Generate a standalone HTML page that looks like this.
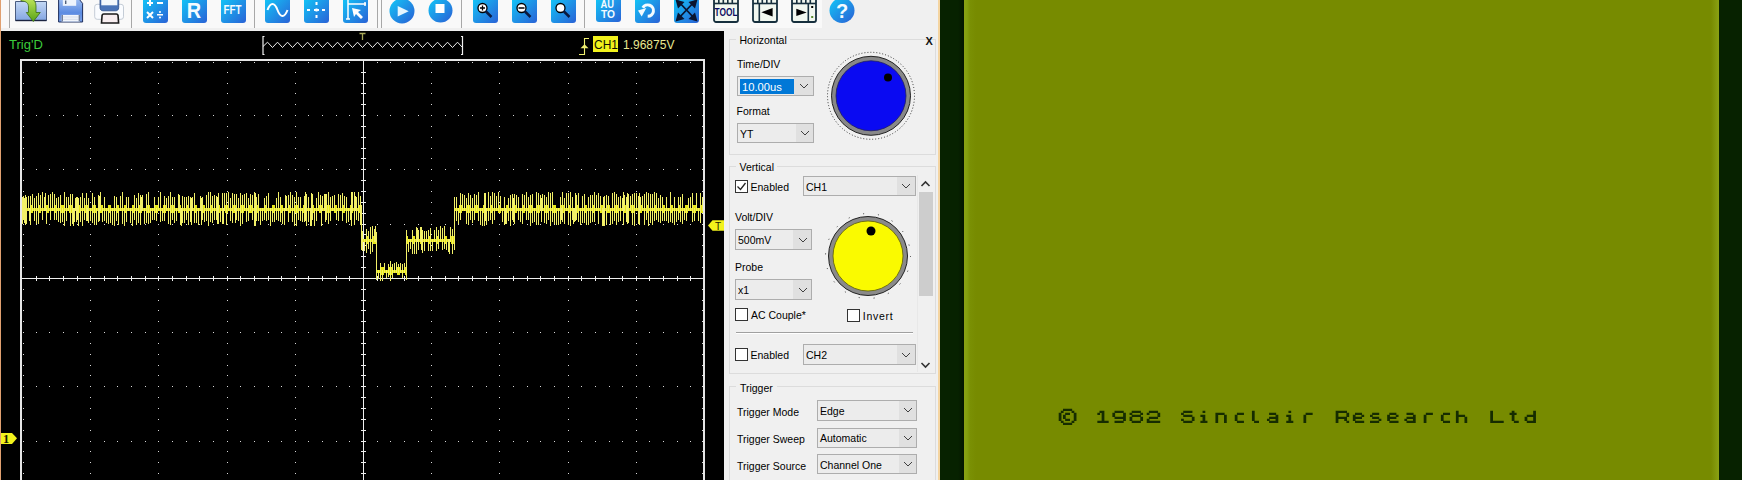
<!DOCTYPE html>
<html><head><meta charset="utf-8"><style>
html,body{margin:0;padding:0;width:1742px;height:480px;overflow:hidden;background:#f0f0f0;position:relative;font-family:'Liberation Sans', sans-serif}
</style></head><body>
<div style="position:absolute;left:0;top:0;width:822px;height:28px;background:#f9f9f9"></div>
<div style="position:absolute;left:0;top:0;width:1px;height:480px;background:#e0a070"></div>
<div style="position:absolute;left:9px;top:0;width:1px;height:28px;background:#a8a8a8"></div><div style="position:absolute;left:131px;top:0;width:1px;height:28px;background:#a8a8a8"></div><div style="position:absolute;left:254px;top:0;width:1px;height:28px;background:#a8a8a8"></div><div style="position:absolute;left:377px;top:0;width:1px;height:28px;background:#a8a8a8"></div><div style="position:absolute;left:381px;top:0;width:1px;height:28px;background:#a8a8a8"></div><div style="position:absolute;left:461px;top:0;width:1px;height:28px;background:#a8a8a8"></div><div style="position:absolute;left:584px;top:0;width:1px;height:28px;background:#a8a8a8"></div><svg style="position:absolute;left:14px;top:-4px" width="36" height="28" viewBox="14 -4 36 28">
<defs><linearGradient id="fold" x1="0" y1="0" x2="0" y2="1"><stop offset="0" stop-color="#c4d8f4"/><stop offset="1" stop-color="#84a6e2"/></linearGradient>
<linearGradient id="arr" x1="0" y1="0" x2="0" y2="1"><stop offset="0" stop-color="#c8ec60"/><stop offset="1" stop-color="#5aa418"/></linearGradient></defs>
<path d="M15.5 1.5h31v19h-31z" fill="url(#fold)" stroke="#4a5c80" stroke-width="1"/>
<path d="M15.5 20.5h31" stroke="#1c2440" stroke-width="1.4"/>
<path d="M21 -4C30 -4 36 -1 36 6V12.5H40.3L33.3 21.5L26.3 12.5H28.5V7C28.5 3 26 1 21 1Z" fill="url(#arr)" stroke="#3a6a18" stroke-width="0.8"/>
</svg><svg style="position:absolute;left:56px;top:0px" width="30" height="26" viewBox="56 0 30 26">
<defs><linearGradient id="flp" x1="0" y1="0" x2="0" y2="1"><stop offset="0" stop-color="#9cbcf0"/><stop offset="0.6" stop-color="#5c8ce2"/><stop offset="1" stop-color="#7aa0e6"/></linearGradient></defs>
<path d="M58.6 -1h20.4l3.6 4.4v18.6h-24z" fill="url(#flp)" stroke="#1e2e5c" stroke-width="1"/>
<rect x="62.8" y="-1" width="13.4" height="6.8" fill="#eef4fc"/>
<rect x="65" y="0.5" width="1.4" height="3.5" fill="#50607a"/>
<rect x="61.6" y="14.9" width="18.4" height="6.7" fill="#f2f6fc"/>
<path d="M63 17h15.5M63 19.3h15.5" stroke="#c8d0e0" stroke-width="0.7"/>
<path d="M62.3 15v6.5M79.3 15v6.5" stroke="#6a7a98" stroke-width="1.3"/>
</svg><svg style="position:absolute;left:92px;top:0px" width="34" height="26" viewBox="92 0 34 26">
<rect x="94.7" y="4.3" width="28.8" height="15" rx="2.5" fill="#fafcff" stroke="#c4ccd6" stroke-width="1"/>
<path d="M100 -1h18.7v8.8c0 2-1.5 3-3 3h-12.7c-1.5 0-3-1-3-3z" fill="#4a74b8" stroke="#2c4c88" stroke-width="0.8"/>
<rect x="101.3" y="-1" width="16" height="6.3" fill="#f4f8fc"/>
<path d="M101.5 23l0.6-7.8c0.2-0.8 0.8-1.2 1.6-1.2h12.7c0.8 0 1.4 0.4 1.6 1.2l0.6 7.8z" fill="#f8eef0" stroke="#1a1a1a" stroke-width="1.6"/>
</svg><svg style="position:absolute;left:143px;top:-3px" width="25" height="26" viewBox="0 0 25 26">
<defs><linearGradient id="g143" x1="0" y1="0" x2="1" y2="1"><stop offset="0" stop-color="#12c8f8"/><stop offset="1" stop-color="#2a62d6"/></linearGradient></defs>
<rect x="0" y="0" width="25" height="26" rx="3" fill="url(#g143)"/>
<g transform="translate(0,3)"><g fill="#fff"><rect x="4" y="2" width="6" height="2"/><rect x="6" y="0" width="2" height="6"/><rect x="14" y="2" width="6" height="2"/><path d="M4 12l6 6M10 12l-6 6" stroke="#fff" stroke-width="2"/><rect x="14" y="14" width="6" height="1.5"/><circle cx="17" cy="12" r="1"/><circle cx="17" cy="17.5" r="1"/></g></g></svg><svg style="position:absolute;left:182px;top:-3px" width="25" height="26" viewBox="0 0 25 26">
<defs><linearGradient id="g182" x1="0" y1="0" x2="1" y2="1"><stop offset="0" stop-color="#12c8f8"/><stop offset="1" stop-color="#2a62d6"/></linearGradient></defs>
<rect x="0" y="0" width="25" height="26" rx="3" fill="url(#g182)"/>
<g transform="translate(0,3)"><text x="4.7" y="17.7" font-family="Liberation Sans" font-weight="bold" font-size="21.5" fill="#f4fbff" textLength="14.4" lengthAdjust="spacingAndGlyphs">R</text></g></svg><svg style="position:absolute;left:221px;top:-3px" width="25" height="26" viewBox="0 0 25 26">
<defs><linearGradient id="g221" x1="0" y1="0" x2="1" y2="1"><stop offset="0" stop-color="#12c8f8"/><stop offset="1" stop-color="#2a62d6"/></linearGradient></defs>
<rect x="0" y="0" width="25" height="26" rx="3" fill="url(#g221)"/>
<g transform="translate(0,3)"><text x="2.6" y="14.1" font-family="Liberation Sans" font-weight="bold" font-size="12.3" fill="#f4fbff" textLength="18" lengthAdjust="spacingAndGlyphs">FFT</text></g></svg><svg style="position:absolute;left:265px;top:-3px" width="25" height="26" viewBox="0 0 25 26">
<defs><linearGradient id="g265" x1="0" y1="0" x2="1" y2="1"><stop offset="0" stop-color="#12c8f8"/><stop offset="1" stop-color="#2a62d6"/></linearGradient></defs>
<rect x="0" y="0" width="25" height="26" rx="3" fill="url(#g265)"/>
<g transform="translate(0,3)"><path d="M2.5 10c3-8 7-8 10 0s7 8 10 0" stroke="#fff" stroke-width="2" fill="none"/></g></svg><svg style="position:absolute;left:304px;top:-3px" width="25" height="26" viewBox="0 0 25 26">
<defs><linearGradient id="g304" x1="0" y1="0" x2="1" y2="1"><stop offset="0" stop-color="#12c8f8"/><stop offset="1" stop-color="#2a62d6"/></linearGradient></defs>
<rect x="0" y="0" width="25" height="26" rx="3" fill="url(#g304)"/>
<g transform="translate(0,3)"><g fill="#fff"><rect x="11.5" y="2" width="2" height="3"/><rect x="11.5" y="8.5" width="2" height="3"/><rect x="11.5" y="15" width="2" height="3"/><rect x="3" y="9" width="3" height="2"/><rect x="10" y="9" width="5" height="2"/><rect x="18" y="9" width="3" height="2"/></g></g></svg><svg style="position:absolute;left:343px;top:-3px" width="25" height="26" viewBox="0 0 25 26">
<defs><linearGradient id="g343" x1="0" y1="0" x2="1" y2="1"><stop offset="0" stop-color="#12c8f8"/><stop offset="1" stop-color="#2a62d6"/></linearGradient></defs>
<rect x="0" y="0" width="25" height="26" rx="3" fill="url(#g343)"/>
<g transform="translate(0,3)"><g stroke="#fff" fill="none" stroke-width="1.5"><path d="M5 0v19M5 4h18M3 19h4M22 2v4"/></g><path d="M9 8l9 2-3 2 5 5-2 2-5-5-2 3z" fill="#fff"/></g></svg><svg style="position:absolute;left:389px;top:-2px" width="26" height="26" viewBox="0 0 26 26">
<defs><linearGradient id="pc" x1="0" y1="0" x2="1" y2="1"><stop offset="0" stop-color="#12c8f8"/><stop offset="1" stop-color="#2a5ed4"/></linearGradient></defs>
<circle cx="13" cy="13" r="12.5" fill="url(#pc)"/><path d="M8.7 8l11 5.2-11 5.2z" fill="#e6f6ff"/></svg><svg style="position:absolute;left:428px;top:-2px" width="25" height="25" viewBox="0 0 25 25">
<circle cx="12.5" cy="12.5" r="12" fill="url(#pc)"/><rect x="7.5" y="6" width="9" height="9" fill="#fff"/></svg><svg style="position:absolute;left:473px;top:-3px" width="25" height="26" viewBox="0 0 25 26">
<defs><linearGradient id="g473" x1="0" y1="0" x2="1" y2="1"><stop offset="0" stop-color="#12c8f8"/><stop offset="1" stop-color="#2a62d6"/></linearGradient></defs>
<rect x="0" y="0" width="25" height="26" rx="3" fill="url(#g473)"/>
<g transform="translate(0,3)"><circle cx="9.5" cy="8" r="4.5" fill="#fff" stroke="#000" stroke-width="1.3"/><path d="M7 8h5M9.5 5.5v5" stroke="#000" stroke-width="1.3"/><path d="M12.5 11l6 6" stroke="#0a1a40" stroke-width="2.5"/></g></svg><svg style="position:absolute;left:512px;top:-3px" width="25" height="26" viewBox="0 0 25 26">
<defs><linearGradient id="g512" x1="0" y1="0" x2="1" y2="1"><stop offset="0" stop-color="#12c8f8"/><stop offset="1" stop-color="#2a62d6"/></linearGradient></defs>
<rect x="0" y="0" width="25" height="26" rx="3" fill="url(#g512)"/>
<g transform="translate(0,3)"><circle cx="9.5" cy="8" r="4.5" fill="#fff" stroke="#000" stroke-width="1.3"/><path d="M6.5 8h6" stroke="#000" stroke-width="1.5"/><path d="M12.5 11l6 6" stroke="#0a1a40" stroke-width="2.5"/></g></svg><svg style="position:absolute;left:551px;top:-3px" width="25" height="26" viewBox="0 0 25 26">
<defs><linearGradient id="g551" x1="0" y1="0" x2="1" y2="1"><stop offset="0" stop-color="#12c8f8"/><stop offset="1" stop-color="#2a62d6"/></linearGradient></defs>
<rect x="0" y="0" width="25" height="26" rx="3" fill="url(#g551)"/>
<g transform="translate(0,3)"><circle cx="9.5" cy="8" r="4.5" fill="#fff" stroke="#000" stroke-width="1.3"/><path d="M12.5 11l6 6" stroke="#0a1a40" stroke-width="2.5"/></g></svg><svg style="position:absolute;left:596px;top:-3px" width="25" height="25" viewBox="0 0 25 25">
<defs><linearGradient id="g596" x1="0" y1="0" x2="1" y2="1"><stop offset="0" stop-color="#12c8f8"/><stop offset="1" stop-color="#2a62d6"/></linearGradient></defs>
<rect x="0" y="0" width="25" height="25" rx="3" fill="url(#g596)"/>
<g transform="translate(0,3)"><text x="4.5" y="8.4" font-family="Liberation Sans" font-weight="bold" font-size="10.3" fill="#f4fbff" textLength="13.5" lengthAdjust="spacingAndGlyphs">AU</text><text x="4.9" y="17.7" font-family="Liberation Sans" font-weight="bold" font-size="10.3" fill="#f4fbff" textLength="14" lengthAdjust="spacingAndGlyphs">TO</text></g></svg><svg style="position:absolute;left:635px;top:-3px" width="25" height="26" viewBox="0 0 25 26">
<defs><linearGradient id="g635" x1="0" y1="0" x2="1" y2="1"><stop offset="0" stop-color="#12c8f8"/><stop offset="1" stop-color="#2a62d6"/></linearGradient></defs>
<rect x="0" y="0" width="25" height="26" rx="3" fill="url(#g635)"/>
<g transform="translate(0,3)"><path d="M12.7 16.3A5.7 5.7 0 1 0 7.8 7.8" stroke="#f4fbff" stroke-width="3" fill="none"/><path d="M3 10.6l8.3-2.6-4.6 8.6z" fill="#f4fbff"/></g></svg><svg style="position:absolute;left:674px;top:-3px" width="25" height="26" viewBox="0 0 25 26">
<defs><linearGradient id="g674" x1="0" y1="0" x2="1" y2="1"><stop offset="0" stop-color="#12c8f8"/><stop offset="1" stop-color="#2a62d6"/></linearGradient></defs>
<rect x="0" y="0" width="25" height="26" rx="3" fill="url(#g674)"/>
<g transform="translate(0,3)"><g stroke="#0a1530" stroke-width="1.8"><path d="M4 1l17 18M21 1L4 19"/></g><g fill="#0a1530"><path d="M1.5 -0.5l9 2.5-6.5 6.5z"/><path d="M23.5 -0.5l-9 2.5 6.5 6.5z"/><path d="M1.5 21.5l9-2.5-6.5-6.5z"/><path d="M23.5 21.5l-9-2.5 6.5-6.5z"/></g></g></svg><svg style="position:absolute;left:713px;top:-4px" width="26" height="27" viewBox="0 0 26 27">
<rect x="1" y="0" width="24" height="26" rx="2" fill="#f2f8f0" stroke="#17303e" stroke-width="1.8"/>
<path d="M1 7.5h24" stroke="#17303e" stroke-width="1.6"/>
<g fill="#17303e"><rect x="5" y="0" width="1.6" height="7"/><rect x="9.5" y="0" width="1.6" height="7"/><rect x="14" y="0" width="1.6" height="7"/><rect x="18.5" y="0" width="1.6" height="7"/></g>
<text x="13" y="19.5" text-anchor="middle" font-family="Liberation Sans" font-weight="bold" font-size="10.5" fill="#0c0c60" textLength="23" lengthAdjust="spacingAndGlyphs">TOOL</text></svg><svg style="position:absolute;left:752px;top:-4px" width="26" height="27" viewBox="0 0 26 27">
<rect x="1" y="0" width="24" height="26" rx="2" fill="#f2f8f0" stroke="#17303e" stroke-width="1.8"/>
<path d="M1 7.5h24" stroke="#17303e" stroke-width="1.6"/>
<g fill="#17303e"><rect x="5" y="0" width="1.6" height="7"/><rect x="9.5" y="0" width="1.6" height="7"/><rect x="14" y="0" width="1.6" height="7"/><rect x="18.5" y="0" width="1.6" height="7"/></g>
<path d="M7.3 7.5v18" stroke="#17303e" stroke-width="1.6"/><path d="M9.3 16.3l11.3-4.3v8.5z" fill="#000"/></svg><svg style="position:absolute;left:791px;top:-4px" width="26" height="27" viewBox="0 0 26 27">
<rect x="1" y="0" width="24" height="26" rx="2" fill="#f2f8f0" stroke="#17303e" stroke-width="1.8"/>
<path d="M1 7.5h24" stroke="#17303e" stroke-width="1.6"/>
<g fill="#17303e"><rect x="5" y="0" width="1.6" height="7"/><rect x="9.5" y="0" width="1.6" height="7"/><rect x="14" y="0" width="1.6" height="7"/><rect x="18.5" y="0" width="1.6" height="7"/></g>
<path d="M17.3 7.5v18" stroke="#17303e" stroke-width="1.6"/><path d="M5.3 12.8l10.4 3.6-10.4 3.6z" fill="#000"/><rect x="20.2" y="10" width="2" height="2" fill="#000"/><rect x="20.2" y="20" width="2" height="2" fill="#5a8a30"/></svg><svg style="position:absolute;left:829px;top:-2px" width="26" height="26" viewBox="0 0 26 26">
<circle cx="13" cy="12.5" r="12.5" fill="url(#pc)"/><text x="13" y="19.5" text-anchor="middle" font-family="Liberation Sans" font-weight="bold" font-size="20" fill="#f4fbff">?</text></svg>
<div style="position:absolute;left:1px;top:31px;width:723px;height:449px;background:#000"></div>
<svg width="723" height="449" viewBox="1 31 723 449" style="position:absolute;left:1px;top:31px">
<g shape-rendering="crispEdges"><rect x="20" y="59" width="685" height="2" fill="#e6e6e6"/><rect x="20" y="59" width="2" height="421" fill="#e6e6e6"/><rect x="703" y="59" width="2" height="421" fill="#e6e6e6"/><path d="M23 72h1v1h-1zM23 83h1v1h-1zM23 93h1v1h-1zM23 104h1v1h-1zM23 115h1v1h-1zM23 126h1v1h-1zM23 137h1v1h-1zM23 148h1v1h-1zM23 158h1v1h-1zM23 169h1v1h-1zM23 180h1v1h-1zM23 191h1v1h-1zM23 202h1v1h-1zM23 213h1v1h-1zM23 224h1v1h-1zM23 234h1v1h-1zM23 245h1v1h-1zM23 256h1v1h-1zM23 267h1v1h-1zM23 278h1v1h-1zM23 289h1v1h-1zM23 300h1v1h-1zM23 310h1v1h-1zM23 321h1v1h-1zM23 332h1v1h-1zM23 343h1v1h-1zM23 354h1v1h-1zM23 365h1v1h-1zM23 375h1v1h-1zM23 386h1v1h-1zM23 397h1v1h-1zM23 408h1v1h-1zM23 419h1v1h-1zM23 430h1v1h-1zM23 441h1v1h-1zM23 451h1v1h-1zM23 462h1v1h-1zM23 473h1v1h-1zM90 72h1v1h-1zM90 83h1v1h-1zM90 93h1v1h-1zM90 104h1v1h-1zM90 115h1v1h-1zM90 126h1v1h-1zM90 137h1v1h-1zM90 148h1v1h-1zM90 158h1v1h-1zM90 169h1v1h-1zM90 180h1v1h-1zM90 191h1v1h-1zM90 202h1v1h-1zM90 213h1v1h-1zM90 224h1v1h-1zM90 234h1v1h-1zM90 245h1v1h-1zM90 256h1v1h-1zM90 267h1v1h-1zM90 278h1v1h-1zM90 289h1v1h-1zM90 300h1v1h-1zM90 310h1v1h-1zM90 321h1v1h-1zM90 332h1v1h-1zM90 343h1v1h-1zM90 354h1v1h-1zM90 365h1v1h-1zM90 375h1v1h-1zM90 386h1v1h-1zM90 397h1v1h-1zM90 408h1v1h-1zM90 419h1v1h-1zM90 430h1v1h-1zM90 441h1v1h-1zM90 451h1v1h-1zM90 462h1v1h-1zM90 473h1v1h-1zM158 72h1v1h-1zM158 83h1v1h-1zM158 93h1v1h-1zM158 104h1v1h-1zM158 115h1v1h-1zM158 126h1v1h-1zM158 137h1v1h-1zM158 148h1v1h-1zM158 158h1v1h-1zM158 169h1v1h-1zM158 180h1v1h-1zM158 191h1v1h-1zM158 202h1v1h-1zM158 213h1v1h-1zM158 224h1v1h-1zM158 234h1v1h-1zM158 245h1v1h-1zM158 256h1v1h-1zM158 267h1v1h-1zM158 278h1v1h-1zM158 289h1v1h-1zM158 300h1v1h-1zM158 310h1v1h-1zM158 321h1v1h-1zM158 332h1v1h-1zM158 343h1v1h-1zM158 354h1v1h-1zM158 365h1v1h-1zM158 375h1v1h-1zM158 386h1v1h-1zM158 397h1v1h-1zM158 408h1v1h-1zM158 419h1v1h-1zM158 430h1v1h-1zM158 441h1v1h-1zM158 451h1v1h-1zM158 462h1v1h-1zM158 473h1v1h-1zM227 72h1v1h-1zM227 83h1v1h-1zM227 93h1v1h-1zM227 104h1v1h-1zM227 115h1v1h-1zM227 126h1v1h-1zM227 137h1v1h-1zM227 148h1v1h-1zM227 158h1v1h-1zM227 169h1v1h-1zM227 180h1v1h-1zM227 191h1v1h-1zM227 202h1v1h-1zM227 213h1v1h-1zM227 224h1v1h-1zM227 234h1v1h-1zM227 245h1v1h-1zM227 256h1v1h-1zM227 267h1v1h-1zM227 278h1v1h-1zM227 289h1v1h-1zM227 300h1v1h-1zM227 310h1v1h-1zM227 321h1v1h-1zM227 332h1v1h-1zM227 343h1v1h-1zM227 354h1v1h-1zM227 365h1v1h-1zM227 375h1v1h-1zM227 386h1v1h-1zM227 397h1v1h-1zM227 408h1v1h-1zM227 419h1v1h-1zM227 430h1v1h-1zM227 441h1v1h-1zM227 451h1v1h-1zM227 462h1v1h-1zM227 473h1v1h-1zM295 72h1v1h-1zM295 83h1v1h-1zM295 93h1v1h-1zM295 104h1v1h-1zM295 115h1v1h-1zM295 126h1v1h-1zM295 137h1v1h-1zM295 148h1v1h-1zM295 158h1v1h-1zM295 169h1v1h-1zM295 180h1v1h-1zM295 191h1v1h-1zM295 202h1v1h-1zM295 213h1v1h-1zM295 224h1v1h-1zM295 234h1v1h-1zM295 245h1v1h-1zM295 256h1v1h-1zM295 267h1v1h-1zM295 278h1v1h-1zM295 289h1v1h-1zM295 300h1v1h-1zM295 310h1v1h-1zM295 321h1v1h-1zM295 332h1v1h-1zM295 343h1v1h-1zM295 354h1v1h-1zM295 365h1v1h-1zM295 375h1v1h-1zM295 386h1v1h-1zM295 397h1v1h-1zM295 408h1v1h-1zM295 419h1v1h-1zM295 430h1v1h-1zM295 441h1v1h-1zM295 451h1v1h-1zM295 462h1v1h-1zM295 473h1v1h-1zM431 72h1v1h-1zM431 83h1v1h-1zM431 93h1v1h-1zM431 104h1v1h-1zM431 115h1v1h-1zM431 126h1v1h-1zM431 137h1v1h-1zM431 148h1v1h-1zM431 158h1v1h-1zM431 169h1v1h-1zM431 180h1v1h-1zM431 191h1v1h-1zM431 202h1v1h-1zM431 213h1v1h-1zM431 224h1v1h-1zM431 234h1v1h-1zM431 245h1v1h-1zM431 256h1v1h-1zM431 267h1v1h-1zM431 278h1v1h-1zM431 289h1v1h-1zM431 300h1v1h-1zM431 310h1v1h-1zM431 321h1v1h-1zM431 332h1v1h-1zM431 343h1v1h-1zM431 354h1v1h-1zM431 365h1v1h-1zM431 375h1v1h-1zM431 386h1v1h-1zM431 397h1v1h-1zM431 408h1v1h-1zM431 419h1v1h-1zM431 430h1v1h-1zM431 441h1v1h-1zM431 451h1v1h-1zM431 462h1v1h-1zM431 473h1v1h-1zM499 72h1v1h-1zM499 83h1v1h-1zM499 93h1v1h-1zM499 104h1v1h-1zM499 115h1v1h-1zM499 126h1v1h-1zM499 137h1v1h-1zM499 148h1v1h-1zM499 158h1v1h-1zM499 169h1v1h-1zM499 180h1v1h-1zM499 191h1v1h-1zM499 202h1v1h-1zM499 213h1v1h-1zM499 224h1v1h-1zM499 234h1v1h-1zM499 245h1v1h-1zM499 256h1v1h-1zM499 267h1v1h-1zM499 278h1v1h-1zM499 289h1v1h-1zM499 300h1v1h-1zM499 310h1v1h-1zM499 321h1v1h-1zM499 332h1v1h-1zM499 343h1v1h-1zM499 354h1v1h-1zM499 365h1v1h-1zM499 375h1v1h-1zM499 386h1v1h-1zM499 397h1v1h-1zM499 408h1v1h-1zM499 419h1v1h-1zM499 430h1v1h-1zM499 441h1v1h-1zM499 451h1v1h-1zM499 462h1v1h-1zM499 473h1v1h-1zM568 72h1v1h-1zM568 83h1v1h-1zM568 93h1v1h-1zM568 104h1v1h-1zM568 115h1v1h-1zM568 126h1v1h-1zM568 137h1v1h-1zM568 148h1v1h-1zM568 158h1v1h-1zM568 169h1v1h-1zM568 180h1v1h-1zM568 191h1v1h-1zM568 202h1v1h-1zM568 213h1v1h-1zM568 224h1v1h-1zM568 234h1v1h-1zM568 245h1v1h-1zM568 256h1v1h-1zM568 267h1v1h-1zM568 278h1v1h-1zM568 289h1v1h-1zM568 300h1v1h-1zM568 310h1v1h-1zM568 321h1v1h-1zM568 332h1v1h-1zM568 343h1v1h-1zM568 354h1v1h-1zM568 365h1v1h-1zM568 375h1v1h-1zM568 386h1v1h-1zM568 397h1v1h-1zM568 408h1v1h-1zM568 419h1v1h-1zM568 430h1v1h-1zM568 441h1v1h-1zM568 451h1v1h-1zM568 462h1v1h-1zM568 473h1v1h-1zM636 72h1v1h-1zM636 83h1v1h-1zM636 93h1v1h-1zM636 104h1v1h-1zM636 115h1v1h-1zM636 126h1v1h-1zM636 137h1v1h-1zM636 148h1v1h-1zM636 158h1v1h-1zM636 169h1v1h-1zM636 180h1v1h-1zM636 191h1v1h-1zM636 202h1v1h-1zM636 213h1v1h-1zM636 224h1v1h-1zM636 234h1v1h-1zM636 245h1v1h-1zM636 256h1v1h-1zM636 267h1v1h-1zM636 278h1v1h-1zM636 289h1v1h-1zM636 300h1v1h-1zM636 310h1v1h-1zM636 321h1v1h-1zM636 332h1v1h-1zM636 343h1v1h-1zM636 354h1v1h-1zM636 365h1v1h-1zM636 375h1v1h-1zM636 386h1v1h-1zM636 397h1v1h-1zM636 408h1v1h-1zM636 419h1v1h-1zM636 430h1v1h-1zM636 441h1v1h-1zM636 451h1v1h-1zM636 462h1v1h-1zM636 473h1v1h-1zM702 72h1v1h-1zM702 83h1v1h-1zM702 93h1v1h-1zM702 104h1v1h-1zM702 115h1v1h-1zM702 126h1v1h-1zM702 137h1v1h-1zM702 148h1v1h-1zM702 158h1v1h-1zM702 169h1v1h-1zM702 180h1v1h-1zM702 191h1v1h-1zM702 202h1v1h-1zM702 213h1v1h-1zM702 224h1v1h-1zM702 234h1v1h-1zM702 245h1v1h-1zM702 256h1v1h-1zM702 267h1v1h-1zM702 278h1v1h-1zM702 289h1v1h-1zM702 300h1v1h-1zM702 310h1v1h-1zM702 321h1v1h-1zM702 332h1v1h-1zM702 343h1v1h-1zM702 354h1v1h-1zM702 365h1v1h-1zM702 375h1v1h-1zM702 386h1v1h-1zM702 397h1v1h-1zM702 408h1v1h-1zM702 419h1v1h-1zM702 430h1v1h-1zM702 441h1v1h-1zM702 451h1v1h-1zM702 462h1v1h-1zM702 473h1v1h-1zM36 62h1v1h-1zM49 62h1v1h-1zM63 62h1v1h-1zM77 62h1v1h-1zM90 62h1v1h-1zM104 62h1v1h-1zM117 62h1v1h-1zM131 62h1v1h-1zM145 62h1v1h-1zM158 62h1v1h-1zM172 62h1v1h-1zM186 62h1v1h-1zM199 62h1v1h-1zM213 62h1v1h-1zM227 62h1v1h-1zM240 62h1v1h-1zM254 62h1v1h-1zM268 62h1v1h-1zM281 62h1v1h-1zM295 62h1v1h-1zM308 62h1v1h-1zM322 62h1v1h-1zM336 62h1v1h-1zM349 62h1v1h-1zM363 62h1v1h-1zM377 62h1v1h-1zM390 62h1v1h-1zM404 62h1v1h-1zM418 62h1v1h-1zM431 62h1v1h-1zM445 62h1v1h-1zM458 62h1v1h-1zM472 62h1v1h-1zM486 62h1v1h-1zM499 62h1v1h-1zM513 62h1v1h-1zM527 62h1v1h-1zM540 62h1v1h-1zM554 62h1v1h-1zM568 62h1v1h-1zM581 62h1v1h-1zM595 62h1v1h-1zM609 62h1v1h-1zM622 62h1v1h-1zM636 62h1v1h-1zM649 62h1v1h-1zM663 62h1v1h-1zM677 62h1v1h-1zM690 62h1v1h-1zM36 115h1v1h-1zM49 115h1v1h-1zM63 115h1v1h-1zM77 115h1v1h-1zM90 115h1v1h-1zM104 115h1v1h-1zM117 115h1v1h-1zM131 115h1v1h-1zM145 115h1v1h-1zM158 115h1v1h-1zM172 115h1v1h-1zM186 115h1v1h-1zM199 115h1v1h-1zM213 115h1v1h-1zM227 115h1v1h-1zM240 115h1v1h-1zM254 115h1v1h-1zM268 115h1v1h-1zM281 115h1v1h-1zM295 115h1v1h-1zM308 115h1v1h-1zM322 115h1v1h-1zM336 115h1v1h-1zM349 115h1v1h-1zM363 115h1v1h-1zM377 115h1v1h-1zM390 115h1v1h-1zM404 115h1v1h-1zM418 115h1v1h-1zM431 115h1v1h-1zM445 115h1v1h-1zM458 115h1v1h-1zM472 115h1v1h-1zM486 115h1v1h-1zM499 115h1v1h-1zM513 115h1v1h-1zM527 115h1v1h-1zM540 115h1v1h-1zM554 115h1v1h-1zM568 115h1v1h-1zM581 115h1v1h-1zM595 115h1v1h-1zM609 115h1v1h-1zM622 115h1v1h-1zM636 115h1v1h-1zM649 115h1v1h-1zM663 115h1v1h-1zM677 115h1v1h-1zM690 115h1v1h-1zM36 169h1v1h-1zM49 169h1v1h-1zM63 169h1v1h-1zM77 169h1v1h-1zM90 169h1v1h-1zM104 169h1v1h-1zM117 169h1v1h-1zM131 169h1v1h-1zM145 169h1v1h-1zM158 169h1v1h-1zM172 169h1v1h-1zM186 169h1v1h-1zM199 169h1v1h-1zM213 169h1v1h-1zM227 169h1v1h-1zM240 169h1v1h-1zM254 169h1v1h-1zM268 169h1v1h-1zM281 169h1v1h-1zM295 169h1v1h-1zM308 169h1v1h-1zM322 169h1v1h-1zM336 169h1v1h-1zM349 169h1v1h-1zM363 169h1v1h-1zM377 169h1v1h-1zM390 169h1v1h-1zM404 169h1v1h-1zM418 169h1v1h-1zM431 169h1v1h-1zM445 169h1v1h-1zM458 169h1v1h-1zM472 169h1v1h-1zM486 169h1v1h-1zM499 169h1v1h-1zM513 169h1v1h-1zM527 169h1v1h-1zM540 169h1v1h-1zM554 169h1v1h-1zM568 169h1v1h-1zM581 169h1v1h-1zM595 169h1v1h-1zM609 169h1v1h-1zM622 169h1v1h-1zM636 169h1v1h-1zM649 169h1v1h-1zM663 169h1v1h-1zM677 169h1v1h-1zM690 169h1v1h-1zM36 224h1v1h-1zM49 224h1v1h-1zM63 224h1v1h-1zM77 224h1v1h-1zM90 224h1v1h-1zM104 224h1v1h-1zM117 224h1v1h-1zM131 224h1v1h-1zM145 224h1v1h-1zM158 224h1v1h-1zM172 224h1v1h-1zM186 224h1v1h-1zM199 224h1v1h-1zM213 224h1v1h-1zM227 224h1v1h-1zM240 224h1v1h-1zM254 224h1v1h-1zM268 224h1v1h-1zM281 224h1v1h-1zM295 224h1v1h-1zM308 224h1v1h-1zM322 224h1v1h-1zM336 224h1v1h-1zM349 224h1v1h-1zM363 224h1v1h-1zM377 224h1v1h-1zM390 224h1v1h-1zM404 224h1v1h-1zM418 224h1v1h-1zM431 224h1v1h-1zM445 224h1v1h-1zM458 224h1v1h-1zM472 224h1v1h-1zM486 224h1v1h-1zM499 224h1v1h-1zM513 224h1v1h-1zM527 224h1v1h-1zM540 224h1v1h-1zM554 224h1v1h-1zM568 224h1v1h-1zM581 224h1v1h-1zM595 224h1v1h-1zM609 224h1v1h-1zM622 224h1v1h-1zM636 224h1v1h-1zM649 224h1v1h-1zM663 224h1v1h-1zM677 224h1v1h-1zM690 224h1v1h-1zM36 332h1v1h-1zM49 332h1v1h-1zM63 332h1v1h-1zM77 332h1v1h-1zM90 332h1v1h-1zM104 332h1v1h-1zM117 332h1v1h-1zM131 332h1v1h-1zM145 332h1v1h-1zM158 332h1v1h-1zM172 332h1v1h-1zM186 332h1v1h-1zM199 332h1v1h-1zM213 332h1v1h-1zM227 332h1v1h-1zM240 332h1v1h-1zM254 332h1v1h-1zM268 332h1v1h-1zM281 332h1v1h-1zM295 332h1v1h-1zM308 332h1v1h-1zM322 332h1v1h-1zM336 332h1v1h-1zM349 332h1v1h-1zM363 332h1v1h-1zM377 332h1v1h-1zM390 332h1v1h-1zM404 332h1v1h-1zM418 332h1v1h-1zM431 332h1v1h-1zM445 332h1v1h-1zM458 332h1v1h-1zM472 332h1v1h-1zM486 332h1v1h-1zM499 332h1v1h-1zM513 332h1v1h-1zM527 332h1v1h-1zM540 332h1v1h-1zM554 332h1v1h-1zM568 332h1v1h-1zM581 332h1v1h-1zM595 332h1v1h-1zM609 332h1v1h-1zM622 332h1v1h-1zM636 332h1v1h-1zM649 332h1v1h-1zM663 332h1v1h-1zM677 332h1v1h-1zM690 332h1v1h-1zM36 386h1v1h-1zM49 386h1v1h-1zM63 386h1v1h-1zM77 386h1v1h-1zM90 386h1v1h-1zM104 386h1v1h-1zM117 386h1v1h-1zM131 386h1v1h-1zM145 386h1v1h-1zM158 386h1v1h-1zM172 386h1v1h-1zM186 386h1v1h-1zM199 386h1v1h-1zM213 386h1v1h-1zM227 386h1v1h-1zM240 386h1v1h-1zM254 386h1v1h-1zM268 386h1v1h-1zM281 386h1v1h-1zM295 386h1v1h-1zM308 386h1v1h-1zM322 386h1v1h-1zM336 386h1v1h-1zM349 386h1v1h-1zM363 386h1v1h-1zM377 386h1v1h-1zM390 386h1v1h-1zM404 386h1v1h-1zM418 386h1v1h-1zM431 386h1v1h-1zM445 386h1v1h-1zM458 386h1v1h-1zM472 386h1v1h-1zM486 386h1v1h-1zM499 386h1v1h-1zM513 386h1v1h-1zM527 386h1v1h-1zM540 386h1v1h-1zM554 386h1v1h-1zM568 386h1v1h-1zM581 386h1v1h-1zM595 386h1v1h-1zM609 386h1v1h-1zM622 386h1v1h-1zM636 386h1v1h-1zM649 386h1v1h-1zM663 386h1v1h-1zM677 386h1v1h-1zM690 386h1v1h-1zM36 441h1v1h-1zM49 441h1v1h-1zM63 441h1v1h-1zM77 441h1v1h-1zM90 441h1v1h-1zM104 441h1v1h-1zM117 441h1v1h-1zM131 441h1v1h-1zM145 441h1v1h-1zM158 441h1v1h-1zM172 441h1v1h-1zM186 441h1v1h-1zM199 441h1v1h-1zM213 441h1v1h-1zM227 441h1v1h-1zM240 441h1v1h-1zM254 441h1v1h-1zM268 441h1v1h-1zM281 441h1v1h-1zM295 441h1v1h-1zM308 441h1v1h-1zM322 441h1v1h-1zM336 441h1v1h-1zM349 441h1v1h-1zM363 441h1v1h-1zM377 441h1v1h-1zM390 441h1v1h-1zM404 441h1v1h-1zM418 441h1v1h-1zM431 441h1v1h-1zM445 441h1v1h-1zM458 441h1v1h-1zM472 441h1v1h-1zM486 441h1v1h-1zM499 441h1v1h-1zM513 441h1v1h-1zM527 441h1v1h-1zM540 441h1v1h-1zM554 441h1v1h-1zM568 441h1v1h-1zM581 441h1v1h-1zM595 441h1v1h-1zM609 441h1v1h-1zM622 441h1v1h-1zM636 441h1v1h-1zM649 441h1v1h-1zM663 441h1v1h-1zM677 441h1v1h-1zM690 441h1v1h-1z" fill="#d8d8d8"/><rect x="363" y="61" width="1" height="419" fill="#f0f0f0"/><rect x="22" y="278" width="681" height="1" fill="#f0f0f0"/><path d="M361 72h5v1h-5zM361 83h5v1h-5zM361 93h5v1h-5zM361 104h5v1h-5zM361 115h5v1h-5zM361 126h5v1h-5zM361 137h5v1h-5zM361 148h5v1h-5zM361 158h5v1h-5zM361 169h5v1h-5zM361 180h5v1h-5zM361 191h5v1h-5zM361 202h5v1h-5zM361 213h5v1h-5zM361 224h5v1h-5zM361 234h5v1h-5zM361 245h5v1h-5zM361 256h5v1h-5zM361 267h5v1h-5zM361 278h5v1h-5zM361 289h5v1h-5zM361 300h5v1h-5zM361 310h5v1h-5zM361 321h5v1h-5zM361 332h5v1h-5zM361 343h5v1h-5zM361 354h5v1h-5zM361 365h5v1h-5zM361 375h5v1h-5zM361 386h5v1h-5zM361 397h5v1h-5zM361 408h5v1h-5zM361 419h5v1h-5zM361 430h5v1h-5zM361 441h5v1h-5zM361 451h5v1h-5zM361 462h5v1h-5zM361 473h5v1h-5zM36 276h1v5h-1zM49 276h1v5h-1zM63 276h1v5h-1zM77 276h1v5h-1zM90 276h1v5h-1zM104 276h1v5h-1zM117 276h1v5h-1zM131 276h1v5h-1zM145 276h1v5h-1zM158 276h1v5h-1zM172 276h1v5h-1zM186 276h1v5h-1zM199 276h1v5h-1zM213 276h1v5h-1zM227 276h1v5h-1zM240 276h1v5h-1zM254 276h1v5h-1zM268 276h1v5h-1zM281 276h1v5h-1zM295 276h1v5h-1zM308 276h1v5h-1zM322 276h1v5h-1zM336 276h1v5h-1zM349 276h1v5h-1zM363 276h1v5h-1zM377 276h1v5h-1zM390 276h1v5h-1zM404 276h1v5h-1zM418 276h1v5h-1zM431 276h1v5h-1zM445 276h1v5h-1zM458 276h1v5h-1zM472 276h1v5h-1zM486 276h1v5h-1zM499 276h1v5h-1zM513 276h1v5h-1zM527 276h1v5h-1zM540 276h1v5h-1zM554 276h1v5h-1zM568 276h1v5h-1zM581 276h1v5h-1zM595 276h1v5h-1zM609 276h1v5h-1zM622 276h1v5h-1zM636 276h1v5h-1zM649 276h1v5h-1zM663 276h1v5h-1zM677 276h1v5h-1zM690 276h1v5h-1z" fill="#f0f0f0"/></g>
<path d="M22 205h1v8h-1zM23 205h1v8h-1zM24 205h1v8h-1zM25 208h1v3h-1zM26 208h1v3h-1zM27 208h1v3h-1zM28 208h1v3h-1zM29 208h1v3h-1zM30 205h1v8h-1zM31 205h1v8h-1zM32 205h1v8h-1zM33 208h1v3h-1zM34 208h1v3h-1zM35 208h1v3h-1zM36 208h1v3h-1zM37 208h1v3h-1zM38 205h1v8h-1zM39 205h1v8h-1zM40 205h1v8h-1zM41 208h1v3h-1zM42 208h1v3h-1zM43 208h1v3h-1zM44 208h1v3h-1zM45 208h1v3h-1zM46 205h1v8h-1zM47 205h1v8h-1zM48 205h1v8h-1zM49 208h1v3h-1zM50 208h1v3h-1zM51 208h1v3h-1zM52 208h1v3h-1zM53 208h1v3h-1zM54 205h1v8h-1zM55 205h1v8h-1zM56 205h1v8h-1zM57 208h1v3h-1zM58 208h1v3h-1zM59 208h1v3h-1zM60 208h1v3h-1zM61 205h1v8h-1zM62 205h1v8h-1zM63 205h1v8h-1zM64 208h1v3h-1zM65 208h1v3h-1zM66 208h1v3h-1zM67 208h1v3h-1zM68 208h1v3h-1zM69 205h1v8h-1zM70 205h1v8h-1zM71 205h1v8h-1zM72 208h1v3h-1zM73 208h1v3h-1zM74 208h1v3h-1zM75 208h1v3h-1zM76 208h1v3h-1zM77 205h1v8h-1zM78 205h1v8h-1zM79 205h1v8h-1zM80 208h1v3h-1zM81 208h1v3h-1zM82 208h1v3h-1zM83 208h1v3h-1zM84 208h1v3h-1zM85 205h1v8h-1zM86 205h1v8h-1zM87 205h1v8h-1zM88 208h1v3h-1zM89 208h1v3h-1zM90 208h1v3h-1zM91 208h1v3h-1zM92 208h1v3h-1zM93 205h1v8h-1zM94 205h1v8h-1zM95 205h1v8h-1zM96 208h1v3h-1zM97 208h1v3h-1zM98 208h1v3h-1zM99 208h1v3h-1zM100 205h1v8h-1zM101 205h1v8h-1zM102 205h1v8h-1zM103 208h1v3h-1zM104 208h1v3h-1zM105 208h1v3h-1zM106 208h1v3h-1zM107 208h1v3h-1zM108 205h1v8h-1zM109 205h1v8h-1zM110 205h1v8h-1zM111 208h1v3h-1zM112 208h1v3h-1zM113 208h1v3h-1zM114 208h1v3h-1zM115 208h1v3h-1zM116 205h1v8h-1zM117 205h1v8h-1zM118 205h1v8h-1zM119 208h1v3h-1zM120 208h1v3h-1zM121 208h1v3h-1zM122 208h1v3h-1zM123 208h1v3h-1zM124 205h1v8h-1zM125 205h1v8h-1zM126 205h1v8h-1zM127 208h1v3h-1zM128 208h1v3h-1zM129 208h1v3h-1zM130 208h1v3h-1zM131 208h1v3h-1zM132 205h1v8h-1zM133 205h1v8h-1zM134 205h1v8h-1zM135 208h1v3h-1zM136 208h1v3h-1zM137 208h1v3h-1zM138 208h1v3h-1zM139 205h1v8h-1zM140 205h1v8h-1zM141 205h1v8h-1zM142 208h1v3h-1zM143 208h1v3h-1zM144 208h1v3h-1zM145 208h1v3h-1zM146 208h1v3h-1zM147 205h1v8h-1zM148 205h1v8h-1zM149 205h1v8h-1zM150 208h1v3h-1zM151 208h1v3h-1zM152 208h1v3h-1zM153 208h1v3h-1zM154 208h1v3h-1zM155 205h1v8h-1zM156 205h1v8h-1zM157 205h1v8h-1zM158 208h1v3h-1zM159 208h1v3h-1zM160 208h1v3h-1zM161 208h1v3h-1zM162 208h1v3h-1zM163 205h1v8h-1zM164 205h1v8h-1zM165 205h1v8h-1zM166 208h1v3h-1zM167 208h1v3h-1zM168 208h1v3h-1zM169 208h1v3h-1zM170 208h1v3h-1zM171 205h1v8h-1zM172 205h1v8h-1zM173 205h1v8h-1zM174 208h1v3h-1zM175 208h1v3h-1zM176 208h1v3h-1zM177 208h1v3h-1zM178 205h1v8h-1zM179 205h1v8h-1zM180 205h1v8h-1zM181 208h1v3h-1zM182 208h1v3h-1zM183 208h1v3h-1zM184 208h1v3h-1zM185 208h1v3h-1zM186 205h1v8h-1zM187 205h1v8h-1zM188 205h1v8h-1zM189 208h1v3h-1zM190 208h1v3h-1zM191 208h1v3h-1zM192 208h1v3h-1zM193 208h1v3h-1zM194 205h1v8h-1zM195 205h1v8h-1zM196 205h1v8h-1zM197 208h1v3h-1zM198 208h1v3h-1zM199 208h1v3h-1zM200 208h1v3h-1zM201 208h1v3h-1zM202 205h1v8h-1zM203 205h1v8h-1zM204 205h1v8h-1zM205 208h1v3h-1zM206 208h1v3h-1zM207 208h1v3h-1zM208 208h1v3h-1zM209 208h1v3h-1zM210 205h1v8h-1zM211 205h1v8h-1zM212 205h1v8h-1zM213 208h1v3h-1zM214 208h1v3h-1zM215 208h1v3h-1zM216 208h1v3h-1zM217 205h1v8h-1zM218 205h1v8h-1zM219 205h1v8h-1zM220 208h1v3h-1zM221 208h1v3h-1zM222 208h1v3h-1zM223 208h1v3h-1zM224 208h1v3h-1zM225 205h1v8h-1zM226 205h1v8h-1zM227 205h1v8h-1zM228 208h1v3h-1zM229 208h1v3h-1zM230 208h1v3h-1zM231 208h1v3h-1zM232 208h1v3h-1zM233 205h1v8h-1zM234 205h1v8h-1zM235 205h1v8h-1zM236 208h1v3h-1zM237 208h1v3h-1zM238 208h1v3h-1zM239 208h1v3h-1zM240 208h1v3h-1zM241 205h1v8h-1zM242 205h1v8h-1zM243 205h1v8h-1zM244 208h1v3h-1zM245 208h1v3h-1zM246 208h1v3h-1zM247 208h1v3h-1zM248 208h1v3h-1zM249 205h1v8h-1zM250 205h1v8h-1zM251 205h1v8h-1zM252 208h1v3h-1zM253 208h1v3h-1zM254 208h1v3h-1zM255 208h1v3h-1zM256 205h1v8h-1zM257 205h1v8h-1zM258 205h1v8h-1zM259 208h1v3h-1zM260 208h1v3h-1zM261 208h1v3h-1zM262 208h1v3h-1zM263 208h1v3h-1zM264 205h1v8h-1zM265 205h1v8h-1zM266 205h1v8h-1zM267 208h1v3h-1zM268 208h1v3h-1zM269 208h1v3h-1zM270 208h1v3h-1zM271 208h1v3h-1zM272 205h1v8h-1zM273 205h1v8h-1zM274 205h1v8h-1zM275 208h1v3h-1zM276 208h1v3h-1zM277 208h1v3h-1zM278 208h1v3h-1zM279 208h1v3h-1zM280 205h1v8h-1zM281 205h1v8h-1zM282 205h1v8h-1zM283 208h1v3h-1zM284 208h1v3h-1zM285 208h1v3h-1zM286 208h1v3h-1zM287 208h1v3h-1zM288 205h1v8h-1zM289 205h1v8h-1zM290 205h1v8h-1zM291 208h1v3h-1zM292 208h1v3h-1zM293 208h1v3h-1zM294 208h1v3h-1zM295 205h1v8h-1zM296 205h1v8h-1zM297 205h1v8h-1zM298 208h1v3h-1zM299 208h1v3h-1zM300 208h1v3h-1zM301 208h1v3h-1zM302 208h1v3h-1zM303 205h1v8h-1zM304 205h1v8h-1zM305 205h1v8h-1zM306 208h1v3h-1zM307 208h1v3h-1zM308 208h1v3h-1zM309 208h1v3h-1zM310 208h1v3h-1zM311 205h1v8h-1zM312 205h1v8h-1zM313 205h1v8h-1zM314 208h1v3h-1zM315 208h1v3h-1zM316 208h1v3h-1zM317 208h1v3h-1zM318 208h1v3h-1zM319 205h1v8h-1zM320 205h1v8h-1zM321 205h1v8h-1zM322 208h1v3h-1zM323 208h1v3h-1zM324 208h1v3h-1zM325 208h1v3h-1zM326 208h1v3h-1zM327 205h1v8h-1zM328 205h1v8h-1zM329 205h1v8h-1zM330 208h1v3h-1zM331 208h1v3h-1zM332 208h1v3h-1zM333 208h1v3h-1zM334 205h1v8h-1zM335 205h1v8h-1zM336 205h1v8h-1zM337 208h1v3h-1zM338 208h1v3h-1zM339 208h1v3h-1zM340 208h1v3h-1zM341 208h1v3h-1zM342 205h1v8h-1zM343 205h1v8h-1zM344 205h1v8h-1zM345 208h1v3h-1zM346 208h1v3h-1zM347 208h1v3h-1zM348 208h1v3h-1zM349 208h1v3h-1zM350 205h1v8h-1zM351 205h1v8h-1zM352 205h1v8h-1zM353 208h1v3h-1zM354 208h1v3h-1zM355 208h1v3h-1zM356 208h1v3h-1zM357 208h1v3h-1zM358 205h1v8h-1zM359 205h1v8h-1zM360 205h1v8h-1zM361 239h1v3h-1zM362 239h1v3h-1zM363 239h1v3h-1zM364 239h1v3h-1zM365 239h1v3h-1zM366 236h1v8h-1zM367 236h1v8h-1zM368 236h1v8h-1zM369 239h1v3h-1zM370 239h1v3h-1zM371 239h1v3h-1zM372 239h1v3h-1zM373 236h1v8h-1zM374 236h1v8h-1zM375 236h1v8h-1zM376 270h1v3h-1zM377 270h1v3h-1zM378 270h1v3h-1zM379 270h1v3h-1zM380 270h1v3h-1zM381 267h1v8h-1zM382 267h1v8h-1zM383 267h1v8h-1zM384 270h1v3h-1zM385 270h1v3h-1zM386 270h1v3h-1zM387 270h1v3h-1zM388 270h1v3h-1zM389 267h1v8h-1zM390 267h1v8h-1zM391 267h1v8h-1zM392 270h1v3h-1zM393 270h1v3h-1zM394 270h1v3h-1zM395 270h1v3h-1zM396 270h1v3h-1zM397 267h1v8h-1zM398 267h1v8h-1zM399 267h1v8h-1zM400 270h1v3h-1zM401 270h1v3h-1zM402 270h1v3h-1zM403 270h1v3h-1zM404 270h1v3h-1zM405 267h1v8h-1zM406 236h1v8h-1zM407 236h1v8h-1zM408 239h1v3h-1zM409 239h1v3h-1zM410 239h1v3h-1zM411 239h1v3h-1zM412 236h1v8h-1zM413 236h1v8h-1zM414 236h1v8h-1zM415 239h1v3h-1zM416 239h1v3h-1zM417 239h1v3h-1zM418 239h1v3h-1zM419 239h1v3h-1zM420 236h1v8h-1zM421 236h1v8h-1zM422 236h1v8h-1zM423 239h1v3h-1zM424 239h1v3h-1zM425 239h1v3h-1zM426 239h1v3h-1zM427 239h1v3h-1zM428 236h1v8h-1zM429 236h1v8h-1zM430 236h1v8h-1zM431 239h1v3h-1zM432 239h1v3h-1zM433 239h1v3h-1zM434 239h1v3h-1zM435 239h1v3h-1zM436 236h1v8h-1zM437 236h1v8h-1zM438 236h1v8h-1zM439 239h1v3h-1zM440 239h1v3h-1zM441 239h1v3h-1zM442 239h1v3h-1zM443 239h1v3h-1zM444 236h1v8h-1zM445 236h1v8h-1zM446 236h1v8h-1zM447 239h1v3h-1zM448 239h1v3h-1zM449 239h1v3h-1zM450 239h1v3h-1zM451 236h1v8h-1zM452 236h1v8h-1zM453 236h1v8h-1zM454 208h1v3h-1zM455 208h1v3h-1zM456 208h1v3h-1zM457 208h1v3h-1zM458 208h1v3h-1zM459 205h1v8h-1zM460 205h1v8h-1zM461 205h1v8h-1zM462 208h1v3h-1zM463 208h1v3h-1zM464 208h1v3h-1zM465 208h1v3h-1zM466 208h1v3h-1zM467 205h1v8h-1zM468 205h1v8h-1zM469 205h1v8h-1zM470 208h1v3h-1zM471 208h1v3h-1zM472 208h1v3h-1zM473 208h1v3h-1zM474 208h1v3h-1zM475 205h1v8h-1zM476 205h1v8h-1zM477 205h1v8h-1zM478 208h1v3h-1zM479 208h1v3h-1zM480 208h1v3h-1zM481 208h1v3h-1zM482 208h1v3h-1zM483 205h1v8h-1zM484 205h1v8h-1zM485 205h1v8h-1zM486 208h1v3h-1zM487 208h1v3h-1zM488 208h1v3h-1zM489 208h1v3h-1zM490 205h1v8h-1zM491 205h1v8h-1zM492 205h1v8h-1zM493 208h1v3h-1zM494 208h1v3h-1zM495 208h1v3h-1zM496 208h1v3h-1zM497 208h1v3h-1zM498 205h1v8h-1zM499 205h1v8h-1zM500 205h1v8h-1zM501 208h1v3h-1zM502 208h1v3h-1zM503 208h1v3h-1zM504 208h1v3h-1zM505 208h1v3h-1zM506 205h1v8h-1zM507 205h1v8h-1zM508 205h1v8h-1zM509 208h1v3h-1zM510 208h1v3h-1zM511 208h1v3h-1zM512 208h1v3h-1zM513 208h1v3h-1zM514 205h1v8h-1zM515 205h1v8h-1zM516 205h1v8h-1zM517 208h1v3h-1zM518 208h1v3h-1zM519 208h1v3h-1zM520 208h1v3h-1zM521 208h1v3h-1zM522 205h1v8h-1zM523 205h1v8h-1zM524 205h1v8h-1zM525 208h1v3h-1zM526 208h1v3h-1zM527 208h1v3h-1zM528 208h1v3h-1zM529 205h1v8h-1zM530 205h1v8h-1zM531 205h1v8h-1zM532 208h1v3h-1zM533 208h1v3h-1zM534 208h1v3h-1zM535 208h1v3h-1zM536 208h1v3h-1zM537 205h1v8h-1zM538 205h1v8h-1zM539 205h1v8h-1zM540 208h1v3h-1zM541 208h1v3h-1zM542 208h1v3h-1zM543 208h1v3h-1zM544 208h1v3h-1zM545 205h1v8h-1zM546 205h1v8h-1zM547 205h1v8h-1zM548 208h1v3h-1zM549 208h1v3h-1zM550 208h1v3h-1zM551 208h1v3h-1zM552 208h1v3h-1zM553 205h1v8h-1zM554 205h1v8h-1zM555 205h1v8h-1zM556 208h1v3h-1zM557 208h1v3h-1zM558 208h1v3h-1zM559 208h1v3h-1zM560 208h1v3h-1zM561 205h1v8h-1zM562 205h1v8h-1zM563 205h1v8h-1zM564 208h1v3h-1zM565 208h1v3h-1zM566 208h1v3h-1zM567 208h1v3h-1zM568 205h1v8h-1zM569 205h1v8h-1zM570 205h1v8h-1zM571 208h1v3h-1zM572 208h1v3h-1zM573 208h1v3h-1zM574 208h1v3h-1zM575 208h1v3h-1zM576 205h1v8h-1zM577 205h1v8h-1zM578 205h1v8h-1zM579 208h1v3h-1zM580 208h1v3h-1zM581 208h1v3h-1zM582 208h1v3h-1zM583 208h1v3h-1zM584 205h1v8h-1zM585 205h1v8h-1zM586 205h1v8h-1zM587 208h1v3h-1zM588 208h1v3h-1zM589 208h1v3h-1zM590 208h1v3h-1zM591 208h1v3h-1zM592 205h1v8h-1zM593 205h1v8h-1zM594 205h1v8h-1zM595 208h1v3h-1zM596 208h1v3h-1zM597 208h1v3h-1zM598 208h1v3h-1zM599 208h1v3h-1zM600 205h1v8h-1zM601 205h1v8h-1zM602 205h1v8h-1zM603 208h1v3h-1zM604 208h1v3h-1zM605 208h1v3h-1zM606 208h1v3h-1zM607 205h1v8h-1zM608 205h1v8h-1zM609 205h1v8h-1zM610 208h1v3h-1zM611 208h1v3h-1zM612 208h1v3h-1zM613 208h1v3h-1zM614 208h1v3h-1zM615 205h1v8h-1zM616 205h1v8h-1zM617 205h1v8h-1zM618 208h1v3h-1zM619 208h1v3h-1zM620 208h1v3h-1zM621 208h1v3h-1zM622 208h1v3h-1zM623 205h1v8h-1zM624 205h1v8h-1zM625 205h1v8h-1zM626 208h1v3h-1zM627 208h1v3h-1zM628 208h1v3h-1zM629 208h1v3h-1zM630 208h1v3h-1zM631 205h1v8h-1zM632 205h1v8h-1zM633 205h1v8h-1zM634 208h1v3h-1zM635 208h1v3h-1zM636 208h1v3h-1zM637 208h1v3h-1zM638 208h1v3h-1zM639 205h1v8h-1zM640 205h1v8h-1zM641 205h1v8h-1zM642 208h1v3h-1zM643 208h1v3h-1zM644 208h1v3h-1zM645 208h1v3h-1zM646 205h1v8h-1zM647 205h1v8h-1zM648 205h1v8h-1zM649 208h1v3h-1zM650 208h1v3h-1zM651 208h1v3h-1zM652 208h1v3h-1zM653 208h1v3h-1zM654 205h1v8h-1zM655 205h1v8h-1zM656 205h1v8h-1zM657 208h1v3h-1zM658 208h1v3h-1zM659 208h1v3h-1zM660 208h1v3h-1zM661 208h1v3h-1zM662 205h1v8h-1zM663 205h1v8h-1zM664 205h1v8h-1zM665 208h1v3h-1zM666 208h1v3h-1zM667 208h1v3h-1zM668 208h1v3h-1zM669 208h1v3h-1zM670 205h1v8h-1zM671 205h1v8h-1zM672 205h1v8h-1zM673 208h1v3h-1zM674 208h1v3h-1zM675 208h1v3h-1zM676 208h1v3h-1zM677 208h1v3h-1zM678 205h1v8h-1zM679 205h1v8h-1zM680 205h1v8h-1zM681 208h1v3h-1zM682 208h1v3h-1zM683 208h1v3h-1zM684 208h1v3h-1zM685 205h1v8h-1zM686 205h1v8h-1zM687 205h1v8h-1zM688 208h1v3h-1zM689 208h1v3h-1zM690 208h1v3h-1zM691 208h1v3h-1zM692 208h1v3h-1zM693 205h1v8h-1zM694 205h1v8h-1zM695 205h1v8h-1zM696 208h1v3h-1zM697 208h1v3h-1zM698 208h1v3h-1zM699 208h1v3h-1zM700 208h1v3h-1zM701 205h1v8h-1zM702 205h1v8h-1z" fill="#e8e818" shape-rendering="crispEdges"/><path d="M22 197h1v27h-1zM23 196h1v24h-1zM24 198h1v25h-1zM25 195h1v30h-1zM26 197h1v27h-1zM28 196h1v15h-1zM29 208h1v13h-1zM30 196h1v29h-1zM32 194h1v17h-1zM34 198h1v23h-1zM36 196h1v28h-1zM38 193h1v31h-1zM40 195h1v16h-1zM42 192h1v28h-1zM44 197h1v14h-1zM45 193h1v18h-1zM46 208h1v16h-1zM48 195h1v16h-1zM50 194h1v26h-1zM52 192h1v19h-1zM54 194h1v26h-1zM56 198h1v22h-1zM58 197h1v25h-1zM60 195h1v28h-1zM62 208h1v14h-1zM64 192h1v34h-1zM66 197h1v24h-1zM68 197h1v14h-1zM70 194h1v32h-1zM72 194h1v30h-1zM73 208h1v18h-1zM74 208h1v14h-1zM75 198h1v13h-1zM76 197h1v25h-1zM77 197h1v23h-1zM78 198h1v28h-1zM80 197h1v25h-1zM82 193h1v33h-1zM84 198h1v22h-1zM86 193h1v28h-1zM87 208h1v13h-1zM88 198h1v25h-1zM90 208h1v13h-1zM92 193h1v30h-1zM94 197h1v28h-1zM96 208h1v17h-1zM98 195h1v27h-1zM99 196h1v25h-1zM100 192h1v19h-1zM102 208h1v14h-1zM104 197h1v24h-1zM106 208h1v15h-1zM108 208h1v16h-1zM110 208h1v15h-1zM112 208h1v17h-1zM114 196h1v30h-1zM116 197h1v24h-1zM118 208h1v17h-1zM120 196h1v15h-1zM122 192h1v32h-1zM124 208h1v18h-1zM126 197h1v25h-1zM128 197h1v14h-1zM130 208h1v15h-1zM132 208h1v18h-1zM134 195h1v25h-1zM136 198h1v27h-1zM138 193h1v30h-1zM140 195h1v30h-1zM141 197h1v14h-1zM142 195h1v16h-1zM144 208h1v16h-1zM146 194h1v29h-1zM148 192h1v32h-1zM150 208h1v15h-1zM152 208h1v12h-1zM154 197h1v23h-1zM156 208h1v13h-1zM158 197h1v14h-1zM160 192h1v30h-1zM162 208h1v13h-1zM164 196h1v25h-1zM166 198h1v13h-1zM168 196h1v28h-1zM170 192h1v33h-1zM172 197h1v23h-1zM174 197h1v26h-1zM176 208h1v13h-1zM178 194h1v17h-1zM179 195h1v16h-1zM180 208h1v17h-1zM181 208h1v18h-1zM182 196h1v27h-1zM184 197h1v26h-1zM186 197h1v23h-1zM188 196h1v29h-1zM190 197h1v25h-1zM191 198h1v27h-1zM192 197h1v14h-1zM194 193h1v30h-1zM196 208h1v15h-1zM198 208h1v17h-1zM200 196h1v15h-1zM201 198h1v27h-1zM202 197h1v23h-1zM204 208h1v14h-1zM206 195h1v26h-1zM208 192h1v34h-1zM210 192h1v30h-1zM212 196h1v27h-1zM214 195h1v25h-1zM216 196h1v24h-1zM217 197h1v27h-1zM218 193h1v31h-1zM220 208h1v14h-1zM222 193h1v31h-1zM223 208h1v16h-1zM224 193h1v18h-1zM226 193h1v32h-1zM228 192h1v19h-1zM230 198h1v23h-1zM232 193h1v30h-1zM234 194h1v17h-1zM235 208h1v15h-1zM236 194h1v26h-1zM238 198h1v23h-1zM240 193h1v33h-1zM242 195h1v29h-1zM244 194h1v17h-1zM246 193h1v29h-1zM248 198h1v23h-1zM250 194h1v17h-1zM252 195h1v25h-1zM254 192h1v34h-1zM255 193h1v33h-1zM256 197h1v24h-1zM258 194h1v27h-1zM260 208h1v17h-1zM262 208h1v13h-1zM264 198h1v22h-1zM266 196h1v25h-1zM268 193h1v27h-1zM270 208h1v18h-1zM272 208h1v14h-1zM274 208h1v14h-1zM276 198h1v22h-1zM278 192h1v29h-1zM280 197h1v25h-1zM282 208h1v16h-1zM284 208h1v17h-1zM285 195h1v16h-1zM286 196h1v15h-1zM288 195h1v27h-1zM290 192h1v19h-1zM292 195h1v27h-1zM294 197h1v29h-1zM296 192h1v34h-1zM298 197h1v23h-1zM300 197h1v24h-1zM302 208h1v14h-1zM304 196h1v26h-1zM305 192h1v29h-1zM306 194h1v32h-1zM308 197h1v25h-1zM310 208h1v18h-1zM311 193h1v33h-1zM312 194h1v26h-1zM314 208h1v18h-1zM316 198h1v23h-1zM318 192h1v19h-1zM320 195h1v16h-1zM321 208h1v18h-1zM322 196h1v15h-1zM324 194h1v17h-1zM325 194h1v28h-1zM326 194h1v26h-1zM328 192h1v32h-1zM330 197h1v24h-1zM332 196h1v15h-1zM334 195h1v16h-1zM336 208h1v12h-1zM338 194h1v27h-1zM340 195h1v16h-1zM342 193h1v28h-1zM344 196h1v15h-1zM346 197h1v26h-1zM348 208h1v14h-1zM350 208h1v12h-1zM351 192h1v34h-1zM352 192h1v19h-1zM354 192h1v33h-1zM355 196h1v15h-1zM356 197h1v23h-1zM358 192h1v29h-1zM360 196h1v29h-1zM362 231h1v20h-1zM364 239h1v12h-1zM366 229h1v24h-1zM368 231h1v18h-1zM370 227h1v27h-1zM372 226h1v26h-1zM374 229h1v13h-1zM375 226h1v16h-1zM376 270h1v8h-1zM378 270h1v9h-1zM380 263h1v18h-1zM382 270h1v11h-1zM384 263h1v10h-1zM386 270h1v8h-1zM388 264h1v13h-1zM390 261h1v20h-1zM392 264h1v14h-1zM394 263h1v10h-1zM396 262h1v11h-1zM398 264h1v9h-1zM400 263h1v10h-1zM402 264h1v14h-1zM404 263h1v10h-1zM406 230h1v23h-1zM408 239h1v13h-1zM410 239h1v10h-1zM412 230h1v24h-1zM414 239h1v15h-1zM416 227h1v27h-1zM417 228h1v14h-1zM418 230h1v20h-1zM420 227h1v15h-1zM421 227h1v23h-1zM422 230h1v23h-1zM424 231h1v20h-1zM426 231h1v11h-1zM428 230h1v21h-1zM430 228h1v23h-1zM432 239h1v12h-1zM434 230h1v12h-1zM436 227h1v24h-1zM438 230h1v19h-1zM440 226h1v16h-1zM442 228h1v22h-1zM444 226h1v23h-1zM446 239h1v11h-1zM448 239h1v13h-1zM449 239h1v15h-1zM450 227h1v15h-1zM452 229h1v25h-1zM454 197h1v25h-1zM456 197h1v24h-1zM458 208h1v16h-1zM460 193h1v27h-1zM462 194h1v17h-1zM464 195h1v16h-1zM466 198h1v26h-1zM468 193h1v32h-1zM470 195h1v25h-1zM472 198h1v25h-1zM474 194h1v26h-1zM476 195h1v16h-1zM478 192h1v29h-1zM480 208h1v17h-1zM482 208h1v18h-1zM484 193h1v33h-1zM485 193h1v28h-1zM486 208h1v17h-1zM488 192h1v29h-1zM490 196h1v24h-1zM492 192h1v32h-1zM494 193h1v27h-1zM496 196h1v15h-1zM498 192h1v19h-1zM500 196h1v15h-1zM502 208h1v14h-1zM504 197h1v28h-1zM505 208h1v16h-1zM506 208h1v16h-1zM508 198h1v23h-1zM510 195h1v31h-1zM512 194h1v26h-1zM513 198h1v24h-1zM514 194h1v30h-1zM516 195h1v16h-1zM518 197h1v23h-1zM520 208h1v14h-1zM522 194h1v30h-1zM524 195h1v16h-1zM526 192h1v28h-1zM528 197h1v23h-1zM530 195h1v31h-1zM532 194h1v29h-1zM534 208h1v14h-1zM536 192h1v33h-1zM538 193h1v32h-1zM540 195h1v16h-1zM541 198h1v24h-1zM542 194h1v17h-1zM544 195h1v28h-1zM546 197h1v27h-1zM548 192h1v28h-1zM550 193h1v33h-1zM552 192h1v30h-1zM554 208h1v16h-1zM556 208h1v17h-1zM558 208h1v17h-1zM560 197h1v27h-1zM561 208h1v12h-1zM562 192h1v30h-1zM564 198h1v26h-1zM566 193h1v18h-1zM568 193h1v32h-1zM570 192h1v34h-1zM572 197h1v23h-1zM573 208h1v16h-1zM574 208h1v14h-1zM575 193h1v28h-1zM576 195h1v25h-1zM578 193h1v29h-1zM580 208h1v17h-1zM582 196h1v27h-1zM584 194h1v29h-1zM586 208h1v17h-1zM588 197h1v28h-1zM590 195h1v28h-1zM592 195h1v27h-1zM594 192h1v30h-1zM596 195h1v16h-1zM598 193h1v31h-1zM600 196h1v15h-1zM602 208h1v18h-1zM603 197h1v29h-1zM604 196h1v30h-1zM606 195h1v30h-1zM608 196h1v15h-1zM610 208h1v17h-1zM612 193h1v31h-1zM614 192h1v29h-1zM616 194h1v31h-1zM618 197h1v25h-1zM620 196h1v25h-1zM622 198h1v13h-1zM623 192h1v33h-1zM624 195h1v16h-1zM626 197h1v25h-1zM627 193h1v31h-1zM628 194h1v29h-1zM630 196h1v15h-1zM632 194h1v31h-1zM634 193h1v33h-1zM636 193h1v18h-1zM638 196h1v28h-1zM639 193h1v32h-1zM640 197h1v14h-1zM642 196h1v15h-1zM644 194h1v31h-1zM646 192h1v28h-1zM648 193h1v33h-1zM650 194h1v29h-1zM652 194h1v31h-1zM654 192h1v29h-1zM656 193h1v27h-1zM658 198h1v24h-1zM660 195h1v28h-1zM662 197h1v24h-1zM664 208h1v13h-1zM666 197h1v24h-1zM668 208h1v15h-1zM670 192h1v30h-1zM672 208h1v15h-1zM674 197h1v28h-1zM676 208h1v14h-1zM678 197h1v23h-1zM680 197h1v25h-1zM682 194h1v30h-1zM684 208h1v12h-1zM686 208h1v13h-1zM688 198h1v13h-1zM690 197h1v14h-1zM692 193h1v29h-1zM694 208h1v13h-1zM696 193h1v18h-1zM698 208h1v13h-1zM700 193h1v30h-1zM702 197h1v14h-1zM361 205h1v45h-1zM376 232h1v48h-1zM406 250h1v30h-1zM454 205h1v45h-1z" fill="#f2f068" shape-rendering="crispEdges"/>
</svg>
<div style="position:absolute;left:9px;top:37px;font:13px 'Liberation Sans', sans-serif;color:#3ccc3c;line-height:15px">Trig'D</div>
<svg style="position:absolute;left:255px;top:32px" width="215" height="26" viewBox="255 32 215 26">
<path d="M264.5 36.5h-1.5v18h1.5M461 36.5h1.5v18H461" stroke="#f0f0f0" stroke-width="1.2" fill="none"/>
<path d="M263 46.5L267.5 42.2L272.5 47.5L277.5 42.2L282.5 47.5L287.5 42.2L292.5 47.5L297.5 42.2L302.5 47.5L307.5 42.2L312.5 47.5L317.5 42.2L322.5 47.5L327.5 42.2L332.5 47.5L337.5 42.2L342.5 47.5L347.5 42.2L352.5 47.5L357.5 42.2L362.5 47.5L367.5 42.2L372.5 47.5L377.5 42.2L382.5 47.5L387.5 42.2L392.5 47.5L397.5 42.2L402.5 47.5L407.5 42.2L412.5 47.5L417.5 42.2L422.5 47.5L427.5 42.2L432.5 47.5L437.5 42.2L442.5 47.5L447.5 42.2L452.5 47.5L457.5 42.2L462.5 47.5" stroke="#f0f0f0" stroke-width="1" fill="none"/>
<path d="M359.5 33.5h6M362.5 33.5v6.5" stroke="#a8a858" stroke-width="1.3" fill="none"/>
</svg>
<svg style="position:absolute;left:575px;top:34px" width="20" height="24" viewBox="575 34 20 24">
<path d="M579 54.5h5.5v-16h4.5" stroke="#f0f070" stroke-width="1.1" fill="none"/><path d="M580.5 48.3l4-4 4 4z" fill="#f0f070"/>
</svg>
<div style="position:absolute;left:593px;top:36px;width:25px;height:16px;background:#f2f21c"></div>
<div style="position:absolute;left:594px;top:38px;font:12px 'Liberation Sans', sans-serif;color:#101000;line-height:14px">CH1</div>
<div style="position:absolute;left:623px;top:38px;font:12px 'Liberation Sans', sans-serif;color:#e8e890;line-height:14px">1.96875V</div>
<svg style="position:absolute;left:706px;top:218px" width="19" height="15" viewBox="706 218 19 15">
<path d="M708 225.5l4.5-5.2H724v10.4h-11.5z" fill="#f2f21c"/>
<text x="718" y="229.5" text-anchor="middle" font-family="Liberation Sans" font-size="10" fill="#202000">T</text>
</svg>
<svg style="position:absolute;left:0;top:430px" width="20" height="16" viewBox="0 430 20 16">
<path d="M1 433h11l5 5.3-5 5.7H1z" fill="#f2f21c"/>
<text x="6" y="442.8" text-anchor="middle" font-family="Liberation Serif" font-weight="bold" font-size="12.5" fill="#181800">1</text>
</svg>
<div style="position:absolute;left:724px;top:31px;width:214px;height:449px;background:#f0f0f0"></div>
<div style="position:absolute;left:729px;top:39px;width:207px;height:116px;border:1px solid #dcdcdc;box-sizing:border-box"></div><div style="position:absolute;left:736px;top:33px;width:54px;height:12px;background:#f0f0f0"></div><div style="position:absolute;left:739.5px;top:34.3px;font:normal 10.5px 'Liberation Sans', sans-serif;line-height:12.1px;color:#000;white-space:nowrap;">Horizontal</div><div style="position:absolute;left:737px;top:58.3px;font:normal 10.5px 'Liberation Sans', sans-serif;line-height:12.1px;color:#000;white-space:nowrap;">Time/DIV</div><div style="position:absolute;left:737px;top:76px;width:77px;height:20px;border:1px solid #adadad;box-sizing:border-box;background:#ececec"></div><div style="position:absolute;left:794px;top:77px;width:19px;height:18px;background:#e0e0e0"></div><svg style="position:absolute;left:799.0px;top:83.0px" width="10" height="6"><path d="M1 1l4 4 4-4" stroke="#404040" stroke-width="1" fill="none"/></svg><div style="position:absolute;left:740px;top:79px;width:54px;height:15px;background:#0078d7"></div><div style="position:absolute;left:742px;top:80.7px;font:normal 11.2px 'Liberation Sans', sans-serif;line-height:12.9px;color:#fff;white-space:nowrap;">10.00us</div><div style="position:absolute;left:736.5px;top:105.2px;font:normal 10.5px 'Liberation Sans', sans-serif;line-height:12.1px;color:#000;white-space:nowrap;">Format</div><div style="position:absolute;left:737px;top:123px;width:77px;height:20px;border:1px solid #adadad;box-sizing:border-box;background:#ececec"></div><div style="position:absolute;left:795.5px;top:124px;width:17.5px;height:18px;background:#e0e0e0"></div><svg style="position:absolute;left:799.8px;top:130.0px" width="10" height="6"><path d="M1 1l4 4 4-4" stroke="#404040" stroke-width="1" fill="none"/></svg><div style="position:absolute;left:740px;top:127.7px;font:normal 10.5px 'Liberation Sans', sans-serif;line-height:12.1px;color:#000;white-space:nowrap;">YT</div><svg style="position:absolute;left:826px;top:50px" width="90" height="92" viewBox="826 50 90 92">
<circle cx="871" cy="95.8" r="43.5" fill="none" stroke="#333" stroke-width="1" stroke-dasharray="1 2"/>
<circle cx="871" cy="95.8" r="39.5" fill="#888888" stroke="#222" stroke-width="1"/>
<circle cx="871" cy="95.8" r="35" fill="#0a0af2" stroke="#202060" stroke-width="0.8"/>
<circle cx="888" cy="77.5" r="4" fill="#000"/></svg><div style="position:absolute;left:925.5px;top:35px;font:bold 11px 'Liberation Sans', sans-serif;color:#111">X</div><div style="position:absolute;left:729px;top:166px;width:207px;height:208px;border:1px solid #dcdcdc;box-sizing:border-box"></div><div style="position:absolute;left:736px;top:160px;width:41px;height:12px;background:#f0f0f0"></div><div style="position:absolute;left:739.6px;top:161.3px;font:normal 10.5px 'Liberation Sans', sans-serif;line-height:12.1px;color:#000;white-space:nowrap;">Vertical</div><div style="position:absolute;left:735px;top:180px;width:13px;height:13px;border:1px solid #333;box-sizing:border-box;background:#fff"></div><svg style="position:absolute;left:735px;top:180px" width="13" height="13"><path d="M2.5 6.5l3 3 5-6.5" stroke="#222" stroke-width="1.3" fill="none"/></svg><div style="position:absolute;left:750.5px;top:181.2px;font:normal 10.5px 'Liberation Sans', sans-serif;line-height:12.1px;color:#000;white-space:nowrap;">Enabled</div><div style="position:absolute;left:803px;top:176px;width:113px;height:20px;border:1px solid #adadad;box-sizing:border-box;background:#ececec"></div><div style="position:absolute;left:896.5px;top:177px;width:18.5px;height:18px;background:#e0e0e0"></div><svg style="position:absolute;left:901.2px;top:183.0px" width="10" height="6"><path d="M1 1l4 4 4-4" stroke="#404040" stroke-width="1" fill="none"/></svg><div style="position:absolute;left:806px;top:180.7px;font:normal 10.5px 'Liberation Sans', sans-serif;line-height:12.1px;color:#000;white-space:nowrap;">CH1</div><div style="position:absolute;left:735px;top:211.1px;font:normal 10.5px 'Liberation Sans', sans-serif;line-height:12.1px;color:#000;white-space:nowrap;">Volt/DIV</div><div style="position:absolute;left:735px;top:229px;width:77px;height:21px;border:1px solid #adadad;box-sizing:border-box;background:#ececec"></div><div style="position:absolute;left:793px;top:230px;width:18px;height:19px;background:#e0e0e0"></div><svg style="position:absolute;left:797.5px;top:236.5px" width="10" height="6"><path d="M1 1l4 4 4-4" stroke="#404040" stroke-width="1" fill="none"/></svg><div style="position:absolute;left:738px;top:233.7px;font:normal 10.5px 'Liberation Sans', sans-serif;line-height:12.1px;color:#000;white-space:nowrap;">500mV</div><div style="position:absolute;left:735px;top:261.1px;font:normal 10.5px 'Liberation Sans', sans-serif;line-height:12.1px;color:#000;white-space:nowrap;">Probe</div><div style="position:absolute;left:735px;top:279px;width:77px;height:21px;border:1px solid #adadad;box-sizing:border-box;background:#ececec"></div><div style="position:absolute;left:793px;top:280px;width:18px;height:19px;background:#e0e0e0"></div><svg style="position:absolute;left:797.5px;top:286.5px" width="10" height="6"><path d="M1 1l4 4 4-4" stroke="#404040" stroke-width="1" fill="none"/></svg><div style="position:absolute;left:738px;top:283.7px;font:normal 10.5px 'Liberation Sans', sans-serif;line-height:12.1px;color:#000;white-space:nowrap;">x1</div><div style="position:absolute;left:735px;top:308px;width:13px;height:13px;border:1px solid #333;box-sizing:border-box;background:#fff"></div><div style="position:absolute;left:751px;top:309.4px;font:normal 10.5px 'Liberation Sans', sans-serif;line-height:12.1px;color:#000;white-space:nowrap;">AC Couple*</div><div style="position:absolute;left:847px;top:309px;width:13px;height:13px;border:1px solid #333;box-sizing:border-box;background:#fff"></div><div style="position:absolute;left:862.8px;top:310.0px;font:normal 10.5px 'Liberation Sans', sans-serif;line-height:12.1px;color:#000;white-space:nowrap;letter-spacing:0.7px">Invert</div><div style="position:absolute;left:736px;top:332px;width:177px;height:1px;background:#a0a0a0"></div><div style="position:absolute;left:736px;top:333px;width:177px;height:1px;background:#fff"></div><div style="position:absolute;left:735px;top:348px;width:13px;height:13px;border:1px solid #333;box-sizing:border-box;background:#fff"></div><div style="position:absolute;left:750.5px;top:349.2px;font:normal 10.5px 'Liberation Sans', sans-serif;line-height:12.1px;color:#000;white-space:nowrap;">Enabled</div><div style="position:absolute;left:803px;top:344px;width:113px;height:21px;border:1px solid #adadad;box-sizing:border-box;background:#ececec"></div><div style="position:absolute;left:896.5px;top:345px;width:18.5px;height:19px;background:#e0e0e0"></div><svg style="position:absolute;left:901.2px;top:351.5px" width="10" height="6"><path d="M1 1l4 4 4-4" stroke="#404040" stroke-width="1" fill="none"/></svg><div style="position:absolute;left:806px;top:348.7px;font:normal 10.5px 'Liberation Sans', sans-serif;line-height:12.1px;color:#000;white-space:nowrap;">CH2</div><div style="position:absolute;left:917px;top:175px;width:1px;height:197px;background:#e8e8e8"></div><div style="position:absolute;left:919px;top:192px;width:14px;height:104px;background:#cdcdcd"></div><svg style="position:absolute;left:920px;top:180px" width="11" height="8"><path d="M1.5 6l4-4 4 4" stroke="#333" stroke-width="1.6" fill="none"/></svg><svg style="position:absolute;left:920px;top:361px" width="11" height="8"><path d="M1.5 2l4 4 4-4" stroke="#333" stroke-width="1.6" fill="none"/></svg><svg style="position:absolute;left:823px;top:210px" width="90" height="92" viewBox="823 210 90 92">
<circle cx="868" cy="256" r="42.5" fill="none" stroke="#333" stroke-width="1" stroke-dasharray="1 14"/>
<circle cx="868" cy="256" r="39.5" fill="#8a8a8a" stroke="#222" stroke-width="1"/>
<circle cx="868" cy="256" r="35" fill="#fafa00" stroke="#606000" stroke-width="0.8"/>
<circle cx="871" cy="231" r="4.5" fill="#000"/></svg><div style="position:absolute;left:729px;top:386px;width:207px;height:104px;border:1px solid #dcdcdc;box-sizing:border-box"></div><div style="position:absolute;left:736px;top:380px;width:41px;height:12px;background:#f0f0f0"></div><div style="position:absolute;left:739.9px;top:381.9px;font:normal 10.5px 'Liberation Sans', sans-serif;line-height:12.1px;color:#000;white-space:nowrap;">Trigger</div><div style="position:absolute;left:737px;top:406.0px;font:normal 10.5px 'Liberation Sans', sans-serif;line-height:12.1px;color:#000;white-space:nowrap;">Trigger Mode</div><div style="position:absolute;left:817px;top:400px;width:100px;height:20.5px;border:1px solid #adadad;box-sizing:border-box;background:#ececec"></div><div style="position:absolute;left:898.8px;top:401px;width:17.200000000000045px;height:18.5px;background:#e0e0e0"></div><svg style="position:absolute;left:902.9px;top:407.2px" width="10" height="6"><path d="M1 1l4 4 4-4" stroke="#404040" stroke-width="1" fill="none"/></svg><div style="position:absolute;left:820px;top:404.7px;font:normal 10.5px 'Liberation Sans', sans-serif;line-height:12.1px;color:#000;white-space:nowrap;">Edge</div><div style="position:absolute;left:737px;top:432.9px;font:normal 10.5px 'Liberation Sans', sans-serif;line-height:12.1px;color:#000;white-space:nowrap;">Trigger Sweep</div><div style="position:absolute;left:817px;top:427.5px;width:100px;height:20.0px;border:1px solid #adadad;box-sizing:border-box;background:#ececec"></div><div style="position:absolute;left:898.8px;top:428.5px;width:17.200000000000045px;height:18.0px;background:#e0e0e0"></div><svg style="position:absolute;left:902.9px;top:434.5px" width="10" height="6"><path d="M1 1l4 4 4-4" stroke="#404040" stroke-width="1" fill="none"/></svg><div style="position:absolute;left:820px;top:432.2px;font:normal 10.5px 'Liberation Sans', sans-serif;line-height:12.1px;color:#000;white-space:nowrap;">Automatic</div><div style="position:absolute;left:737px;top:459.5px;font:normal 10.5px 'Liberation Sans', sans-serif;line-height:12.1px;color:#000;white-space:nowrap;">Trigger Source</div><div style="position:absolute;left:817px;top:454.2px;width:100px;height:20.30000000000001px;border:1px solid #adadad;box-sizing:border-box;background:#ececec"></div><div style="position:absolute;left:898.8px;top:455.2px;width:17.200000000000045px;height:18.30000000000001px;background:#e0e0e0"></div><svg style="position:absolute;left:902.9px;top:461.4px" width="10" height="6"><path d="M1 1l4 4 4-4" stroke="#404040" stroke-width="1" fill="none"/></svg><div style="position:absolute;left:820px;top:458.9px;font:normal 10.5px 'Liberation Sans', sans-serif;line-height:12.1px;color:#000;white-space:nowrap;">Channel One</div>
<div style="position:absolute;left:938px;top:0;width:2px;height:480px;background:#f4d4a0"></div>
<div style="position:absolute;left:940px;top:0;width:802px;height:480px;background:#072200"></div>
<div style="position:absolute;left:958px;top:0;width:6px;height:480px;background:linear-gradient(90deg,#072200,#041600)"></div>
<div style="position:absolute;left:964px;top:0;width:755px;height:480px;background:#778b00"></div>
<div style="position:absolute;left:964px;top:0;width:12px;height:480px;background:linear-gradient(90deg,#8aa016 0px,#84a00e 3px,#7a9004 6px,#778b00 12px)"></div>
<div style="position:absolute;left:1711px;top:0;width:8px;height:480px;background:linear-gradient(90deg,#778b00,#8aa214)"></div>
<svg width="1742" height="480" style="position:absolute;left:0;top:0"><path d="M1062.99 408.65h9.19v2.30h-9.19zM1060.85 410.65h2.75v2.30h-2.75zM1071.58 410.65h2.75v2.30h-2.75zM1058.70 412.65h2.75v2.30h-2.75zM1065.14 412.65h4.89v2.30h-4.89zM1073.73 412.65h2.75v2.30h-2.75zM1058.70 414.65h2.75v2.30h-2.75zM1062.99 414.65h2.75v2.30h-2.75zM1073.73 414.65h2.75v2.30h-2.75zM1058.70 416.65h2.75v2.30h-2.75zM1062.99 416.65h2.75v2.30h-2.75zM1073.73 416.65h2.75v2.30h-2.75zM1058.70 418.65h2.75v2.30h-2.75zM1065.14 418.65h4.89v2.30h-4.89zM1073.73 418.65h2.75v2.30h-2.75zM1060.85 420.65h2.75v2.30h-2.75zM1071.58 420.65h2.75v2.30h-2.75zM1062.99 422.65h9.19v2.30h-9.19zM1099.49 410.65h4.89v2.30h-4.89zM1097.35 412.65h2.75v2.30h-2.75zM1101.64 412.65h2.75v2.30h-2.75zM1101.64 414.65h2.75v2.30h-2.75zM1101.64 416.65h2.75v2.30h-2.75zM1101.64 418.65h2.75v2.30h-2.75zM1097.35 420.65h11.33v2.30h-11.33zM1114.52 410.65h9.19v2.30h-9.19zM1112.38 412.65h2.75v2.30h-2.75zM1123.11 412.65h2.75v2.30h-2.75zM1112.38 414.65h2.75v2.30h-2.75zM1123.11 414.65h2.75v2.30h-2.75zM1114.52 416.65h11.33v2.30h-11.33zM1123.11 418.65h2.75v2.30h-2.75zM1114.52 420.65h9.19v2.30h-9.19zM1131.70 410.65h9.19v2.30h-9.19zM1129.55 412.65h2.75v2.30h-2.75zM1140.29 412.65h2.75v2.30h-2.75zM1131.70 414.65h9.19v2.30h-9.19zM1129.55 416.65h2.75v2.30h-2.75zM1140.29 416.65h2.75v2.30h-2.75zM1129.55 418.65h2.75v2.30h-2.75zM1140.29 418.65h2.75v2.30h-2.75zM1131.70 420.65h9.19v2.30h-9.19zM1148.87 410.65h9.19v2.30h-9.19zM1146.73 412.65h2.75v2.30h-2.75zM1157.46 412.65h2.75v2.30h-2.75zM1157.46 414.65h2.75v2.30h-2.75zM1148.87 416.65h9.19v2.30h-9.19zM1146.73 418.65h2.75v2.30h-2.75zM1146.73 420.65h13.48v2.30h-13.48zM1183.23 410.65h9.19v2.30h-9.19zM1181.08 412.65h2.75v2.30h-2.75zM1183.23 414.65h9.19v2.30h-9.19zM1191.81 416.65h2.75v2.30h-2.75zM1181.08 418.65h2.75v2.30h-2.75zM1191.81 418.65h2.75v2.30h-2.75zM1183.23 420.65h9.19v2.30h-9.19zM1202.55 410.65h2.75v2.30h-2.75zM1200.40 414.65h4.89v2.30h-4.89zM1202.55 416.65h2.75v2.30h-2.75zM1202.55 418.65h2.75v2.30h-2.75zM1200.40 420.65h7.04v2.30h-7.04zM1215.43 412.65h9.19v2.30h-9.19zM1215.43 414.65h2.75v2.30h-2.75zM1224.02 414.65h2.75v2.30h-2.75zM1215.43 416.65h2.75v2.30h-2.75zM1224.02 416.65h2.75v2.30h-2.75zM1215.43 418.65h2.75v2.30h-2.75zM1224.02 418.65h2.75v2.30h-2.75zM1215.43 420.65h2.75v2.30h-2.75zM1224.02 420.65h2.75v2.30h-2.75zM1236.90 412.65h7.04v2.30h-7.04zM1234.75 414.65h2.75v2.30h-2.75zM1234.75 416.65h2.75v2.30h-2.75zM1234.75 418.65h2.75v2.30h-2.75zM1236.90 420.65h7.04v2.30h-7.04zM1251.93 410.65h2.75v2.30h-2.75zM1251.93 412.65h2.75v2.30h-2.75zM1251.93 414.65h2.75v2.30h-2.75zM1251.93 416.65h2.75v2.30h-2.75zM1251.93 418.65h2.75v2.30h-2.75zM1254.08 420.65h4.89v2.30h-4.89zM1269.11 412.65h7.04v2.30h-7.04zM1275.55 414.65h2.75v2.30h-2.75zM1269.11 416.65h9.19v2.30h-9.19zM1266.96 418.65h2.75v2.30h-2.75zM1275.55 418.65h2.75v2.30h-2.75zM1269.11 420.65h9.19v2.30h-9.19zM1288.43 410.65h2.75v2.30h-2.75zM1286.28 414.65h4.89v2.30h-4.89zM1288.43 416.65h2.75v2.30h-2.75zM1288.43 418.65h2.75v2.30h-2.75zM1286.28 420.65h7.04v2.30h-7.04zM1305.61 412.65h7.04v2.30h-7.04zM1303.46 414.65h2.75v2.30h-2.75zM1303.46 416.65h2.75v2.30h-2.75zM1303.46 418.65h2.75v2.30h-2.75zM1303.46 420.65h2.75v2.30h-2.75zM1335.66 410.65h11.33v2.30h-11.33zM1335.66 412.65h2.75v2.30h-2.75zM1346.40 412.65h2.75v2.30h-2.75zM1335.66 414.65h2.75v2.30h-2.75zM1346.40 414.65h2.75v2.30h-2.75zM1335.66 416.65h11.33v2.30h-11.33zM1335.66 418.65h2.75v2.30h-2.75zM1344.25 418.65h2.75v2.30h-2.75zM1335.66 420.65h2.75v2.30h-2.75zM1346.40 420.65h2.75v2.30h-2.75zM1354.99 412.65h7.04v2.30h-7.04zM1352.84 414.65h2.75v2.30h-2.75zM1361.43 414.65h2.75v2.30h-2.75zM1352.84 416.65h9.19v2.30h-9.19zM1352.84 418.65h2.75v2.30h-2.75zM1354.99 420.65h9.19v2.30h-9.19zM1372.16 412.65h7.04v2.30h-7.04zM1370.02 414.65h2.75v2.30h-2.75zM1372.16 416.65h7.04v2.30h-7.04zM1378.60 418.65h2.75v2.30h-2.75zM1370.02 420.65h9.19v2.30h-9.19zM1389.34 412.65h7.04v2.30h-7.04zM1387.19 414.65h2.75v2.30h-2.75zM1395.78 414.65h2.75v2.30h-2.75zM1387.19 416.65h9.19v2.30h-9.19zM1387.19 418.65h2.75v2.30h-2.75zM1389.34 420.65h9.19v2.30h-9.19zM1406.51 412.65h7.04v2.30h-7.04zM1412.95 414.65h2.75v2.30h-2.75zM1406.51 416.65h9.19v2.30h-9.19zM1404.37 418.65h2.75v2.30h-2.75zM1412.95 418.65h2.75v2.30h-2.75zM1406.51 420.65h9.19v2.30h-9.19zM1425.84 412.65h7.04v2.30h-7.04zM1423.69 414.65h2.75v2.30h-2.75zM1423.69 416.65h2.75v2.30h-2.75zM1423.69 418.65h2.75v2.30h-2.75zM1423.69 420.65h2.75v2.30h-2.75zM1443.01 412.65h7.04v2.30h-7.04zM1440.87 414.65h2.75v2.30h-2.75zM1440.87 416.65h2.75v2.30h-2.75zM1440.87 418.65h2.75v2.30h-2.75zM1443.01 420.65h7.04v2.30h-7.04zM1455.89 410.65h2.75v2.30h-2.75zM1455.89 412.65h2.75v2.30h-2.75zM1455.89 414.65h9.19v2.30h-9.19zM1455.89 416.65h2.75v2.30h-2.75zM1464.48 416.65h2.75v2.30h-2.75zM1455.89 418.65h2.75v2.30h-2.75zM1464.48 418.65h2.75v2.30h-2.75zM1455.89 420.65h2.75v2.30h-2.75zM1464.48 420.65h2.75v2.30h-2.75zM1490.25 410.65h2.75v2.30h-2.75zM1490.25 412.65h2.75v2.30h-2.75zM1490.25 414.65h2.75v2.30h-2.75zM1490.25 416.65h2.75v2.30h-2.75zM1490.25 418.65h2.75v2.30h-2.75zM1490.25 420.65h13.48v2.30h-13.48zM1511.72 410.65h2.75v2.30h-2.75zM1509.57 412.65h7.04v2.30h-7.04zM1511.72 414.65h2.75v2.30h-2.75zM1511.72 416.65h2.75v2.30h-2.75zM1511.72 418.65h2.75v2.30h-2.75zM1513.86 420.65h4.89v2.30h-4.89zM1533.19 410.65h2.75v2.30h-2.75zM1533.19 412.65h2.75v2.30h-2.75zM1526.75 414.65h9.19v2.30h-9.19zM1524.60 416.65h2.75v2.30h-2.75zM1533.19 416.65h2.75v2.30h-2.75zM1524.60 418.65h2.75v2.30h-2.75zM1533.19 418.65h2.75v2.30h-2.75zM1526.75 420.65h9.19v2.30h-9.19z" fill="#162c00"/></svg>
</body></html>
